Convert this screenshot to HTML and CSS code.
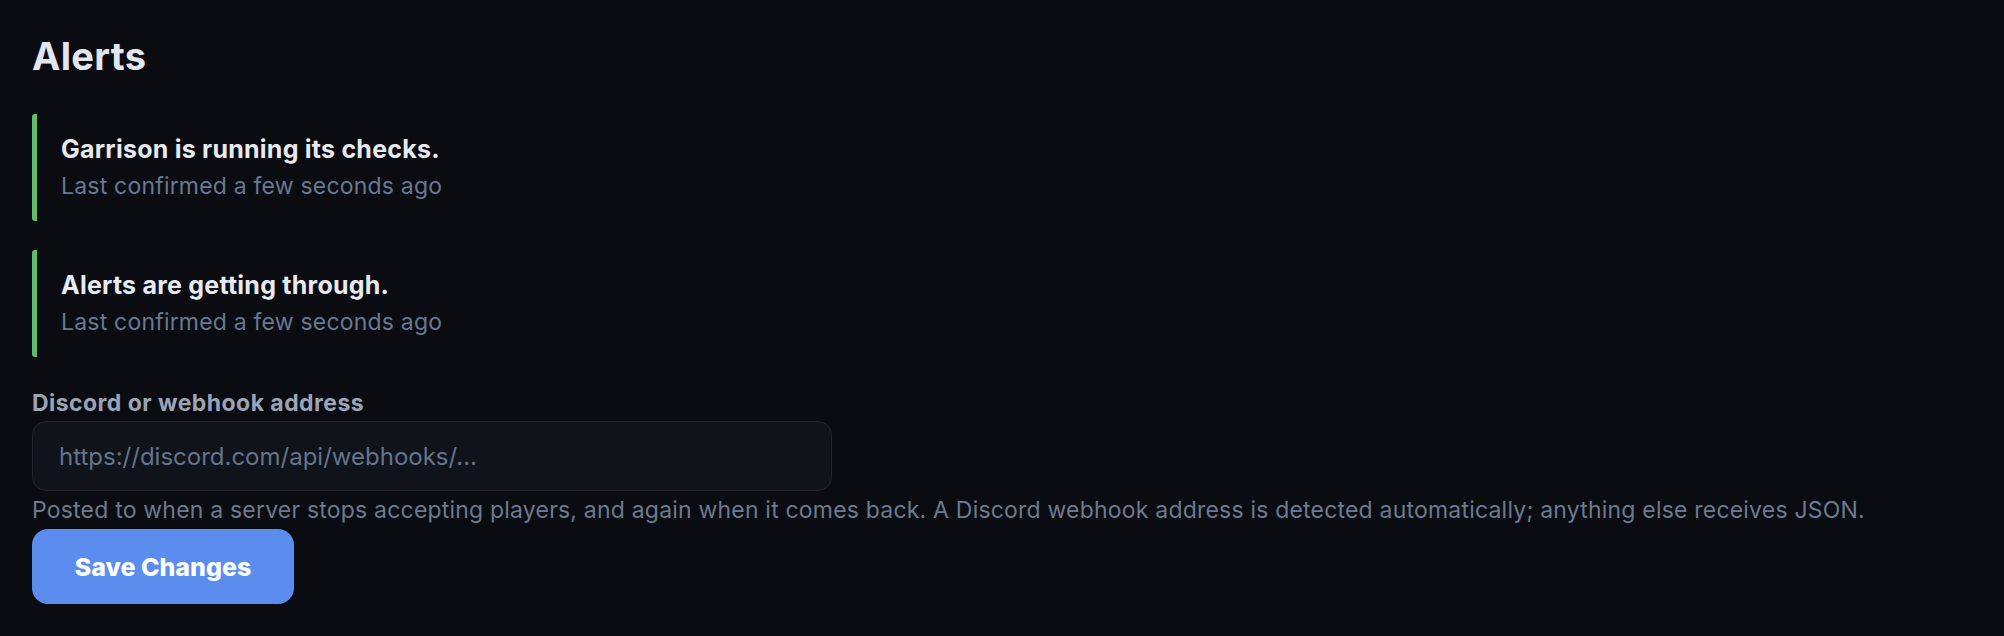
FILE: index.html
```html
<!DOCTYPE html>
<html lang="en">
<head>
<meta charset="utf-8">
<title>Alerts</title>
<link rel="stylesheet" href="styles.css">
</head>
<body>
<main class="page">
  <h1 class="page-title">Alerts</h1>
  <section class="status-list">
    <div class="status-card">
      <div class="status-title">Garrison is running its checks.</div>
      <div class="status-sub">Last confirmed a few seconds ago</div>
    </div>
    <div class="status-card">
      <div class="status-title">Alerts are getting through.</div>
      <div class="status-sub">Last confirmed a few seconds ago</div>
    </div>
  </section>
  <form class="field" onsubmit="return false">
    <label class="field-label" for="hook">Discord or webhook address</label>
    <input class="field-input" id="hook" type="text" placeholder="https://discord.com/api/webhooks/...">
    <p class="field-help">Posted to when a server stops accepting players, and again when it comes back. A Discord webhook address is detected automatically; anything else receives JSON.</p>
    <button class="btn-primary" type="submit">Save Changes</button>
  </form>
</main>
</body>
</html>
```
FILE: styles.css
```css
html, body {
  margin: 0;
  padding: 0;
  background: #0b0c11;
}
body {
  font-family: Inter, "Liberation Sans", sans-serif;
  color: #e4e6ef;
}
.page {
  padding: 34px 32px 0 32px;
}
.page-title {
  margin: 0;
  font-size: 38px;
  line-height: 44px;
  font-weight: 700;
  letter-spacing: 0.3px;
  color: #e4e6ef;
}
.status-list {
  margin-top: 36px;
  display: flex;
  flex-direction: column;
  gap: 29px;
}
.status-card {
  border-left: 5px solid #62bd69;
  border-radius: 3px;
  padding: 20px 0 20px 24px;
  display: flex;
  flex-direction: column;
  gap: 7px;
}
.status-title {
  font-size: 25px;
  line-height: 30px;
  font-weight: 700;
  letter-spacing: 0.23px;
  color: #e8eaf1;
}
.status-sub {
  font-size: 23px;
  line-height: 30px;
  letter-spacing: 0.2px;
  color: #687891;
}
.field {
  margin-top: 32px;
  display: flex;
  flex-direction: column;
  align-items: flex-start;
}
.field-label {
  font-size: 23px;
  line-height: 28px;
  font-weight: 700;
  letter-spacing: 0.45px;
  color: #9aa4b6;
}
.field-input {
  margin-top: 4px;
  box-sizing: border-box;
  width: 800px;
  height: 70px;
  padding: 0 26px;
  background: #10131a;
  border: 1.5px solid #22252d;
  border-radius: 14px;
  font-family: inherit;
  font-size: 24px;
  color: #e4e6ef;
  outline: none;
}
.field-input::placeholder {
  color: #64748b;
}
.field-help {
  margin: 5px 0 0 0;
  font-size: 23px;
  line-height: 28px;
  letter-spacing: 0.2px;
  color: #6b7a90;
}
.btn-primary {
  margin-top: 5px;
  width: 262px;
  height: 75px;
  border: none;
  border-radius: 16px;
  background: #5b8def;
  color: #ffffff;
  font-family: inherit;
  font-size: 25px;
  font-weight: 800;
  cursor: pointer;
}
```
